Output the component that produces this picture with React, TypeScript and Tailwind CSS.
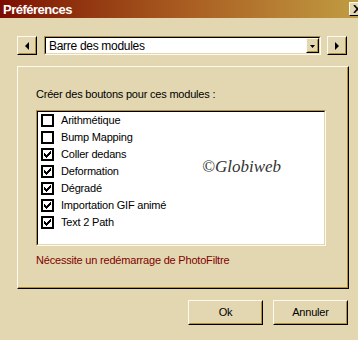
import React from 'react';

const modules = [
  { name: 'Arithmétique', checked: false },
  { name: 'Bump Mapping', checked: false },
  { name: 'Coller dedans', checked: true },
  { name: 'Deformation', checked: true },
  { name: 'Dégradé', checked: true },
  { name: 'Importation GIF animé', checked: true },
  { name: 'Text 2 Path', checked: true },
];

function Raised({ className = '', children }: { className?: string; children?: React.ReactNode }) {
  // classic 3d button: light top/left, black bottom/right, dark inner shadow
  return (
    <div className={`shrink-0 border border-t-[#fffaf0] border-l-[#fffaf0] border-r-black border-b-black bg-[#e3d7b2] ${className}`}>
      <div className="flex h-full w-full items-center justify-center border border-t-[#e3d7b2] border-l-[#e3d7b2] border-r-[#b0903c] border-b-[#b0903c]">
        {children}
      </div>
    </div>
  );
}

function Checkbox({ checked }: { checked: boolean }) {
  return (
    <div className="flex h-[13px] w-[13px] shrink-0 items-center justify-center border-2 border-black bg-white">
      {checked && (
        <svg width="7" height="7" viewBox="0 0 7 7">
          <path d="M0 2h1v1h1v1h1V3h1V2h1V1h1V0h1v3H6v1H5v1H4v1H3v1H2V6H1V5H0z" fill="black" />
        </svg>
      )}
    </div>
  );
}

export default function App() {
  return (
    <div className="flex h-[340px] w-[358px] flex-col overflow-hidden bg-[#e3d7b2] text-[11px] tracking-[-0.2px] text-black [font-family:'Liberation_Sans',Arial,sans-serif]">
      <div className="flex h-[18px] items-center justify-between bg-gradient-to-r from-[#7c0a02] via-[#a85a20] to-[#c09c42] pl-[3px]">
        <span className="text-[13px] font-bold leading-none tracking-[-0.5px] text-white">Préférences</span>
        <div className="-mr-[8px] h-[14px] w-[17px] border border-t-[#fffaf0] border-l-[#fffaf0] border-r-black border-b-black bg-[#e3d7b2]">
          <svg width="9" height="8" viewBox="0 0 9 8" className="ml-[3px] mt-[2px]">
            <path d="M1 0l7 8M8 0L1 8" stroke="black" strokeWidth="1.6" />
          </svg>
        </div>
      </div>

      <div className="mt-[18px] flex h-[19px] items-stretch pl-[17px]">
        <Raised className="w-[20px]">
          <svg width="4" height="8" viewBox="0 0 4 8">
            <path d="M4 0v8L0 4z" fill="black" />
          </svg>
        </Raised>
        <div className="ml-[7px] flex w-[277px] shrink-0 border border-t-[#b0903c] border-l-[#b0903c] border-r-[#fffaf0] border-b-[#fffaf0]">
          <div className="flex flex-1 items-center border border-t-black border-l-black border-r-[#e3d7b2] border-b-[#e3d7b2] bg-white">
            <span className="flex-1 pl-[3px] text-[12px] tracking-[-0.3px]">Barre des modules</span>
            <Raised className="h-[15px] w-[13px]">
              <svg width="5" height="3" viewBox="0 0 5 3" className="mt-[2px]">
                <path d="M0 0h5L2.5 3z" fill="black" />
              </svg>
            </Raised>
          </div>
        </div>
        <Raised className="ml-[6px] w-[20px]">
          <svg width="4" height="8" viewBox="0 0 4 8">
            <path d="M0 0v8l4-4z" fill="black" />
          </svg>
        </Raised>
      </div>

      <div className="ml-[17px] mt-[11px] h-[223px] w-[332px] border border-t-[#fffaf0] border-l-[#fffaf0] border-r-black border-b-black">
        <div className="flex h-full flex-col border-r border-b border-r-[#b0903c] border-b-[#b0903c] pl-[18px]">
          <p className="mt-[20px] leading-[14px]">Créer des boutons pour ces modules :</p>
          <div className="relative mt-[9px] h-[136px] w-[290px] border border-t-[#b0903c] border-l-[#b0903c] border-r-[#fffaf0] border-b-[#fffaf0]">
            <div className="h-full border border-t-black border-l-black border-r-[#e3d7b2] border-b-[#e3d7b2] bg-white pl-[3px]">
              {modules.map((m) => (
                <div key={m.name} className="flex h-[17px] items-center">
                  <Checkbox checked={m.checked} />
                  <span className="ml-[7px]">{m.name}</span>
                </div>
              ))}
            </div>
            <span className="absolute left-[165px] top-[43px] text-[17px] italic tracking-normal text-[#333] [font-family:'Liberation_Serif',serif]">
              ©Globiweb
            </span>
          </div>
          <p className="mt-[7px] leading-[14px] text-[#800000]">Nécessite un redémarrage de PhotoFiltre</p>
        </div>
      </div>

      <div className="mt-[11px] flex justify-end gap-[10px] pr-[10px]">
        <Raised className="h-[25px] w-[75px]">
          <span>Ok</span>
        </Raised>
        <Raised className="h-[25px] w-[75px]">
          <span>Annuler</span>
        </Raised>
      </div>
    </div>
  );
}
